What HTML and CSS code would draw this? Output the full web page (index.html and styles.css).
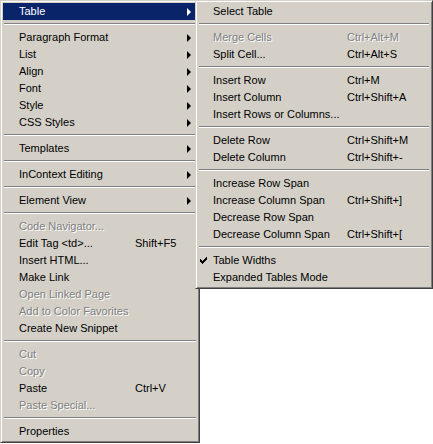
FILE: index.html
```html
<!DOCTYPE html>
<html>
<head>
<meta charset="utf-8">
<link rel="stylesheet" href="styles.css">
</head>
<body>
<div class="stage">
  <div class="menu main">
    <div class="item active sub"><span class="label">Table</span><span class="arrow"></span></div>
    <div class="sep"></div>
    <div class="item sub"><span class="label">Paragraph Format</span><span class="arrow"></span></div>
    <div class="item sub"><span class="label">List</span><span class="arrow"></span></div>
    <div class="item sub"><span class="label">Align</span><span class="arrow"></span></div>
    <div class="item sub"><span class="label">Font</span><span class="arrow"></span></div>
    <div class="item sub"><span class="label">Style</span><span class="arrow"></span></div>
    <div class="item sub"><span class="label">CSS Styles</span><span class="arrow"></span></div>
    <div class="sep"></div>
    <div class="item sub"><span class="label">Templates</span><span class="arrow"></span></div>
    <div class="sep"></div>
    <div class="item sub"><span class="label">InContext Editing</span><span class="arrow"></span></div>
    <div class="sep"></div>
    <div class="item sub"><span class="label">Element View</span><span class="arrow"></span></div>
    <div class="sep"></div>
    <div class="item disabled"><span class="label">Code Navigator...</span></div>
    <div class="item"><span class="label">Edit Tag &lt;td&gt;...</span><span class="key">Shift+F5</span></div>
    <div class="item"><span class="label">Insert HTML...</span></div>
    <div class="item"><span class="label">Make Link</span></div>
    <div class="item disabled"><span class="label">Open Linked Page</span></div>
    <div class="item disabled"><span class="label">Add to Color Favorites</span></div>
    <div class="item"><span class="label">Create New Snippet</span></div>
    <div class="sep"></div>
    <div class="item disabled"><span class="label">Cut</span></div>
    <div class="item disabled"><span class="label">Copy</span></div>
    <div class="item"><span class="label">Paste</span><span class="key">Ctrl+V</span></div>
    <div class="item disabled"><span class="label">Paste Special...</span></div>
    <div class="sep"></div>
    <div class="item"><span class="label">Properties</span></div>
  </div>
  <div class="menu submenu">
    <div class="item"><span class="check"></span><span class="label">Select Table</span></div>
    <div class="sep"></div>
    <div class="item disabled"><span class="check"></span><span class="label">Merge Cells</span><span class="key">Ctrl+Alt+M</span></div>
    <div class="item"><span class="check"></span><span class="label">Split Cell...</span><span class="key">Ctrl+Alt+S</span></div>
    <div class="sep"></div>
    <div class="item"><span class="check"></span><span class="label">Insert Row</span><span class="key">Ctrl+M</span></div>
    <div class="item"><span class="check"></span><span class="label">Insert Column</span><span class="key">Ctrl+Shift+A</span></div>
    <div class="item"><span class="check"></span><span class="label">Insert Rows or Columns...</span></div>
    <div class="sep"></div>
    <div class="item"><span class="check"></span><span class="label">Delete Row</span><span class="key">Ctrl+Shift+M</span></div>
    <div class="item"><span class="check"></span><span class="label">Delete Column</span><span class="key">Ctrl+Shift+-</span></div>
    <div class="sep"></div>
    <div class="item"><span class="check"></span><span class="label">Increase Row Span</span></div>
    <div class="item"><span class="check"></span><span class="label">Increase Column Span</span><span class="key">Ctrl+Shift+]</span></div>
    <div class="item"><span class="check"></span><span class="label">Decrease Row Span</span></div>
    <div class="item"><span class="check"></span><span class="label">Decrease Column Span</span><span class="key">Ctrl+Shift+[</span></div>
    <div class="sep"></div>
    <div class="item"><span class="check"><svg width="7" height="7" viewBox="0 0 7 7"><path d="M0 2h1v1h1v1h1V3h1V2h1V1h1V0h1v3H6v1H5v1H4v1H3v1H2V6H1V5H0z" fill="#000"/></svg></span><span class="label">Table Widths</span></div>
    <div class="item"><span class="check"></span><span class="label">Expanded Tables Mode</span></div>
  </div>
</div>
</body>
</html>
```

FILE: styles.css
```css
html, body {
  margin: 0;
  padding: 0;
  background: #ffffff;
}

.stage {
  display: flex;
  align-items: flex-start;
  font-family: "Liberation Sans", Arial, sans-serif;
  font-size: 11px;
  color: #000;
}

.menu {
  box-sizing: border-box;
  background: #d4d0c8;
  border: 1px solid;
  border-color: #d4d0c8 #404040 #404040 #d4d0c8;
  box-shadow: inset 1px 1px 0 #ffffff, inset -1px -1px 0 #808080;
  padding: 2px;
}

.main {
  width: 200px;
  height: 443px;
}

.submenu {
  width: 238px;
  margin-left: -5px;
  position: relative;
  z-index: 1;
}

.item {
  display: flex;
  align-items: center;
  height: 17px;
  line-height: 17px;
  white-space: nowrap;
}

.main .item {
  padding-left: 16px;
}

.main .label {
  flex: 0 0 116px;
}

.submenu .item {
  padding-left: 0;
}

.check {
  flex: 0 0 15px;
  display: flex;
  align-items: center;
  padding-left: 2px;
  box-sizing: border-box;
}

.submenu .label {
  flex: 0 0 134px;
}

.arrow {
  margin-left: auto;
  margin-right: 6px;
  width: 0;
  height: 0;
  border-top: 4px solid transparent;
  border-bottom: 4px solid transparent;
  border-left: 4px solid #000;
}

.active {
  background: #0a246a;
  color: #ffffff;
}

.active .arrow {
  border-left-color: #ffffff;
}

.disabled {
  color: #808080;
  text-shadow: 1px 1px 0 #ffffff;
}

.sep {
  height: 1px;
  margin: 3px 1px 4px;
  background: #808080;
  border-bottom: 1px solid #ffffff;
}
```
